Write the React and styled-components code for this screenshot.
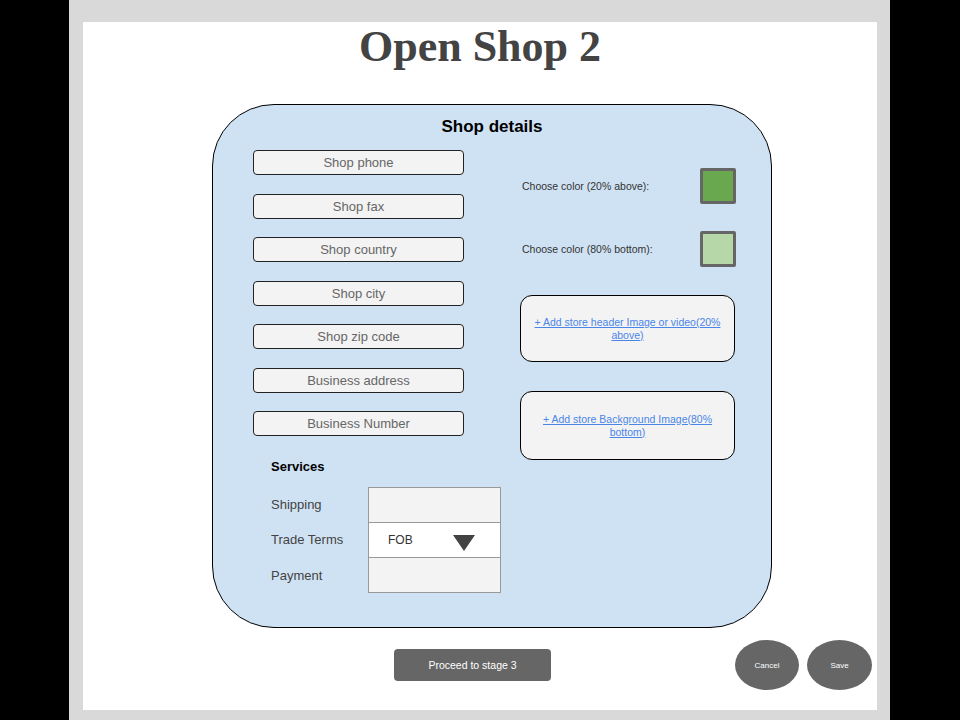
import React from 'react';
import styled, { createGlobalStyle } from 'styled-components';

const GlobalStyle = createGlobalStyle`
  html, body {
    margin: 0;
    padding: 0;
    background: #000000;
    font-family: "Liberation Sans", Arial, sans-serif;
  }
`;

const Frame = styled.div`
  width: 821px;
  height: 720px;
  margin-left: 69px;
  box-sizing: border-box;
  padding: 22px 13px 10px 14px;
  background: #d9d9d9;
`;

const Sheet = styled.div`
  height: 688px;
  background: #ffffff;
  display: flex;
  flex-direction: column;
`;

const Title = styled.h1`
  margin: 0 0 32px;
  height: 50px;
  line-height: 50px;
  text-align: center;
  font-family: "Liberation Serif", "Times New Roman", serif;
  font-weight: 700;
  font-size: 44px;
  color: #434343;
`;

const Panel = styled.section`
  width: 560px;
  height: 524px;
  margin-left: 129px;
  box-sizing: border-box;
  padding-top: 10px;
  background: #cfe2f3;
  border: 1px solid #000000;
  border-radius: 62px;
`;

const PanelHeading = styled.h2`
  margin: 0 0 11px;
  height: 24px;
  line-height: 24px;
  text-align: center;
  font-size: 17px;
  font-weight: 700;
  color: #000000;
`;

const Columns = styled.div`
  display: flex;
`;

const LeftColumn = styled.div`
  width: 211px;
  margin-left: 40px;
  display: flex;
  flex-direction: column;
`;

const Fields = styled.div`
  display: flex;
  flex-direction: column;
  gap: 18.5px;
`;

const Field = styled.div`
  height: 25px;
  box-sizing: border-box;
  border: 1px solid #222222;
  border-radius: 4px;
  background: #f3f3f3;
  display: flex;
  align-items: center;
  justify-content: center;
  font-size: 13px;
  color: #666666;
`;

const Services = styled.div`
  margin: 21px 0 0 18px;
`;

const ServicesHeading = styled.div`
  height: 20px;
  line-height: 20px;
  font-size: 13px;
  font-weight: 700;
  color: #000000;
  margin-bottom: 10px;
`;

const ServiceRow = styled.div`
  display: grid;
  grid-template-columns: 97px 133px;
  height: ${({ $last }) => ($last ? 36 : 35)}px;
`;

const ServiceLabel = styled.div`
  display: flex;
  align-items: center;
  font-size: 13px;
  color: #434343;
`;

const ServiceCell = styled.div`
  box-sizing: border-box;
  border: 1px solid #999999;
  border-bottom: ${({ $last }) => ($last ? '1px solid #999999' : 'none')};
  background: ${({ $white }) => ($white ? '#ffffff' : '#f3f3f3')};
  display: flex;
  align-items: center;
  justify-content: space-between;
  padding: 0 25px 0 19px;
  font-size: 12px;
  color: #333333;
`;

const Triangle = styled.svg`
  width: 22px;
  height: 16px;
  margin-top: 5px;
`;

const RightColumn = styled.div`
  width: 216px;
  margin-left: 56px;
  padding-top: 18px;
  display: flex;
  flex-direction: column;
`;

const ColorRow = styled.div`
  display: flex;
  align-items: center;
  justify-content: space-between;
  height: 36px;
  margin-bottom: ${({ $gap }) => $gap}px;
  padding-left: 2px;
`;

const ColorLabel = styled.span`
  font-size: 10.5px;
  color: #333333;
`;

const Swatch = styled.div`
  width: 36px;
  height: 36px;
  box-sizing: border-box;
  border: 3px solid #666666;
  border-radius: 2px;
  background: ${({ $color }) => $color};
`;

const UploadBox = styled.div`
  width: 215px;
  box-sizing: border-box;
  height: ${({ $height }) => $height}px;
  margin-bottom: ${({ $gap }) => $gap}px;
  border: 1px solid #000000;
  border-radius: 12px;
  background: #f3f3f3;
  display: flex;
  align-items: center;
  justify-content: center;
  padding: 0 4px;
  text-align: center;
`;

const UploadLink = styled.a`
  font-size: 10.5px;
  line-height: 13px;
  color: #4a86e8;
  text-decoration: underline;
  cursor: pointer;
`;

const Footer = styled.div`
  display: flex;
  align-items: center;
  height: 50px;
  margin-top: 12px;
  padding-left: 311px;
`;

const ProceedButton = styled.button`
  flex-shrink: 0;
  box-sizing: border-box;
  width: 157px;
  height: 32px;
  border: none;
  border-radius: 4px;
  background: #666666;
  color: #ffffff;
  font-family: "Liberation Sans", Arial, sans-serif;
  font-size: 10.5px;
  margin: 0 184px 0 0;
  padding: 0;
`;

const RoundButtons = styled.div`
  display: flex;
  gap: 8px;
`;

const RoundButton = styled.button`
  flex-shrink: 0;
  box-sizing: border-box;
  width: ${({ $width }) => $width}px;
  height: 50px;
  border: none;
  border-radius: 50%;
  background: #666666;
  color: #ffffff;
  font-family: "Liberation Sans", Arial, sans-serif;
  font-size: 8px;
  margin: 0;
  padding: 0;
`;

const fields = [
  'Shop phone',
  'Shop fax',
  'Shop country',
  'Shop city',
  'Shop zip code',
  'Business address',
  'Business Number',
];

function App() {
  return (
    <>
      <GlobalStyle />
      <Frame>
        <Sheet>
          <Title>Open Shop 2</Title>
          <Panel>
            <PanelHeading>Shop details</PanelHeading>
            <Columns>
              <LeftColumn>
                <Fields>
                  {fields.map((name) => (
                    <Field key={name}>{name}</Field>
                  ))}
                </Fields>
                <Services>
                  <ServicesHeading>Services</ServicesHeading>
                  <ServiceRow>
                    <ServiceLabel>Shipping</ServiceLabel>
                    <ServiceCell />
                  </ServiceRow>
                  <ServiceRow>
                    <ServiceLabel>Trade Terms</ServiceLabel>
                    <ServiceCell $white>
                      FOB
                      <Triangle viewBox="0 0 22 16">
                        <polygon points="0,0 22,0 11,16" fill="#434343" />
                      </Triangle>
                    </ServiceCell>
                  </ServiceRow>
                  <ServiceRow $last>
                    <ServiceLabel>Payment</ServiceLabel>
                    <ServiceCell $last />
                  </ServiceRow>
                </Services>
              </LeftColumn>
              <RightColumn>
                <ColorRow $gap={27}>
                  <ColorLabel>Choose color (20% above):</ColorLabel>
                  <Swatch $color="#6aa84f" />
                </ColorRow>
                <ColorRow $gap={28}>
                  <ColorLabel>Choose color (80% bottom):</ColorLabel>
                  <Swatch $color="#b6d7a8" />
                </ColorRow>
                <UploadBox $height={67} $gap={29}>
                  <UploadLink>+ Add store header Image or video(20% above)</UploadLink>
                </UploadBox>
                <UploadBox $height={69} $gap={0}>
                  <UploadLink>+ Add store Background Image(80% bottom)</UploadLink>
                </UploadBox>
              </RightColumn>
            </Columns>
          </Panel>
          <Footer>
            <ProceedButton>Proceed to stage 3</ProceedButton>
            <RoundButtons>
              <RoundButton $width={64}>Cancel</RoundButton>
              <RoundButton $width={65}>Save</RoundButton>
            </RoundButtons>
          </Footer>
        </Sheet>
      </Frame>
    </>
  );
}

export default App;
